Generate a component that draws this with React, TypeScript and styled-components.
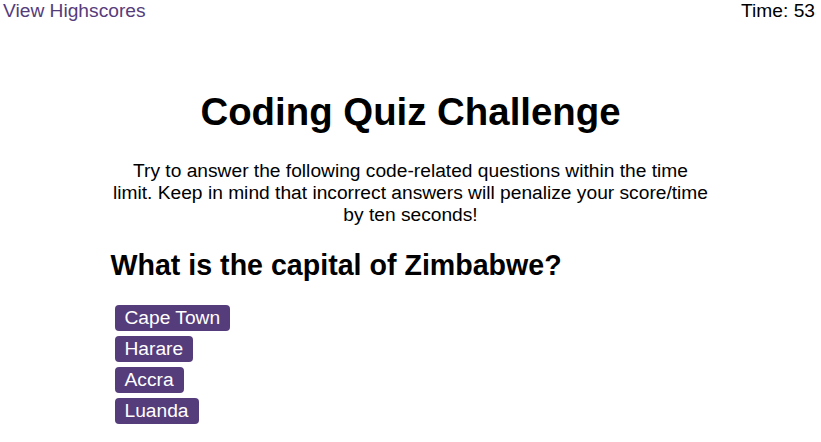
import React from "react";
import styled, { createGlobalStyle } from "styled-components";

const Global = createGlobalStyle`
  html, body { margin: 0; padding: 0; background: #fff; }
  body { font-family: "Liberation Sans", Arial, sans-serif; color: #000; }
`;

const TopBar = styled.header`
  display: flex;
  justify-content: space-between;
  align-items: center;
  padding: 0 6px 0 3px;
  height: 21px;
  font-size: 19.2px;
`;

const HighscoreLink = styled.a`
  color: #553c7b;
  text-decoration: none;
  cursor: pointer;
`;

const Timer = styled.div`
  color: #000;
`;

const Main = styled.main`
  width: 600px;
  margin: 0 auto;
`;

const Title = styled.h1`
  font-size: 38.4px;
  font-weight: bold;
  text-align: center;
  margin: 68px 0 0;
  line-height: 45px;
`;

const Intro = styled.p`
  font-size: 19.2px;
  line-height: 22px;
  text-align: center;
  margin: 26px 1.5px 0;
`;

const Question = styled.h2`
  font-size: 28.6px;
  font-weight: bold;
  margin: 23px 0 0;
  line-height: 32px;
`;

const Choices = styled.div`
  display: flex;
  flex-direction: column;
  align-items: flex-start;
  gap: 5px;
  margin: 24px 0 0 4px;
`;

const Choice = styled.button`
  font-family: "Liberation Sans", Arial, sans-serif;
  font-size: 19.2px;
  line-height: 26px;
  height: 26px;
  padding: 0 10px;
  border: none;
  border-radius: 4px;
  background: #553c7b;
  color: #fff;
  cursor: pointer;
`;

export default function App() {
  const choices = ["Cape Town", "Harare", "Accra", "Luanda"];
  return (
    <>
      <Global />
      <TopBar>
        <HighscoreLink>View Highscores</HighscoreLink>
        <Timer>Time: 53</Timer>
      </TopBar>
      <Main>
        <Title>Coding Quiz Challenge</Title>
        <Intro>
          Try to answer the following code-related questions within the time
          limit. Keep in mind that incorrect answers will penalize your
          score/time by ten seconds!
        </Intro>
        <Question>What is the capital of Zimbabwe?</Question>
        <Choices>
          {choices.map((c) => (
            <Choice key={c}>{c}</Choice>
          ))}
        </Choices>
      </Main>
    </>
  );
}
